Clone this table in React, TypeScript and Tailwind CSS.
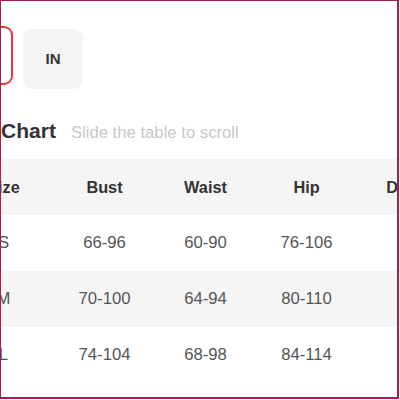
import React from "react";

const rows = [
  { size: "S", bust: "66-96", waist: "60-90", hip: "76-106", d: "" },
  { size: "M", bust: "70-100", waist: "64-94", hip: "80-110", d: "" },
  { size: "L", bust: "74-104", waist: "68-98", hip: "84-114", d: "" },
];

export default function App() {
  return (
    <div className="w-[400px] h-[400px] bg-white">
      <div
        className="w-[399px] h-[399px] overflow-hidden bg-white border-t border-l border-r-2 border-b-2 border-[#a3204d]"
        style={{ fontFamily: '"Liberation Sans", Arial, sans-serif' }}
      >
        <div className="ml-[-50px] w-[520px]">
          <div className="flex gap-[10px] pt-[25px]">
            <div className="w-[62px] h-[59px] rounded-[9px] border-2 border-[#e8393f] bg-white flex items-center justify-center text-[15px] font-bold text-[#333]">
              CM
            </div>
            <div className="w-[60px] h-[60px] mt-[3px] rounded-[9px] bg-[#f4f4f4] flex items-center justify-center text-[15px] font-bold text-[#333]">
              IN
            </div>
          </div>
          <div className="flex items-baseline mt-[26px] h-[32px]">
            <span className="text-[21px] font-bold text-[#333] ml-[3px]">
              <span className="mr-[5px]">Size</span>Chart
            </span>
            <span className="text-[16.7px] text-[#c8c8c8] ml-[15px]">Slide the table to scroll</span>
          </div>
          <div className="mt-[12px] pl-[2px]">
            <div className="grid grid-cols-[101px_101px_101px_101px_101px] h-[56px] items-center bg-[#f5f5f5] text-[16.3px] font-bold text-[#333] text-center">
              <div>Size</div>
              <div>Bust</div>
              <div>Waist</div>
              <div>Hip</div>
              <div className="pl-[3px]">Dress</div>
            </div>
            {rows.map((r, i) => (
              <div
                key={r.size}
                className={`grid grid-cols-[101px_101px_101px_101px_101px] h-[56px] items-center text-[16.7px] text-[#555] text-center ${
                  i % 2 === 1 ? "bg-[#f5f5f5]" : "bg-white"
                }`}
              >
                <div>{r.size}</div>
                <div>{r.bust}</div>
                <div>{r.waist}</div>
                <div>{r.hip}</div>
                <div>{r.d}</div>
              </div>
            ))}
          </div>
        </div>
      </div>
    </div>
  );
}
